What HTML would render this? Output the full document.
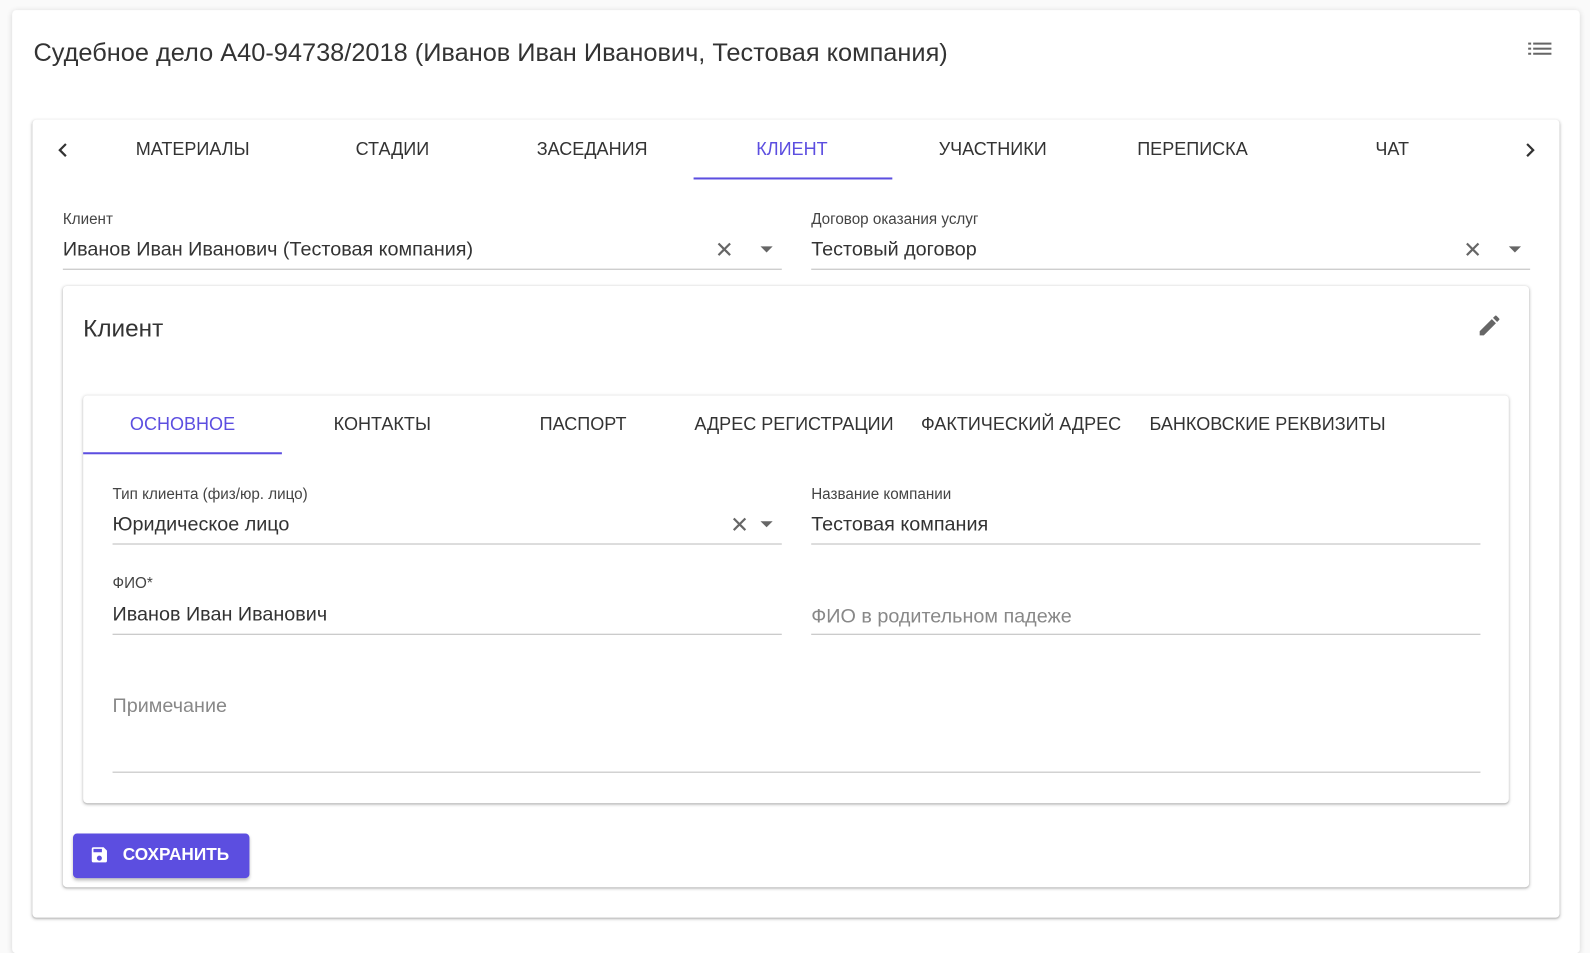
<!DOCTYPE html>
<html><head><meta charset="utf-8"><style>
*{box-sizing:border-box;margin:0;padding:0}
body{width:1590px;height:930px;background:#fafafa;font-family:"Liberation Sans",sans-serif;color:#333;position:relative;overflow:hidden}
#w{position:absolute;left:0;top:0;width:1568px;height:920px;transform:scale(1.014);transform-origin:0 0}
.a{position:absolute}
.card{position:absolute;background:#fff;border-radius:4px;box-shadow:0 1px 3px rgba(0,0,0,.25),0 1px 1px rgba(0,0,0,.08)}
.c{position:absolute;transform:translateX(-50%);white-space:nowrap;font-size:17.8px;color:#333}
.lab{position:absolute;font-size:15px;color:#444;white-space:nowrap}
.val{position:absolute;font-size:19.5px;color:#333;white-space:nowrap}
.ph{position:absolute;font-size:19.5px;color:#888;white-space:nowrap}
.ln{position:absolute;height:1px;background:#bbb}
.x{position:absolute;font-size:22px;color:#666;line-height:1}
.tri{position:absolute;width:0;height:0;border-left:6px solid transparent;border-right:6px solid transparent;border-top:6px solid #666}
</style></head><body><div id="w">
<div class="card" style="left:12px;top:10px;width:1546px;height:930px;box-shadow:0 1px 6px rgba(0,0,0,.15)"></div>
<div class="a" style="left:33px;top:38px;font-size:25px;color:#333;white-space:nowrap">Судебное дело А40-94738/2018 (Иванов Иван Иванович, Тестовая компания)</div>
<svg class="a" style="left:1507px;top:41px" width="24" height="16" viewBox="0 0 24 16"><g fill="#666"><rect x="0" y="1" width="3" height="2"/><rect x="5" y="1" width="18" height="2"/><rect x="0" y="6" width="3" height="2"/><rect x="5" y="6" width="18" height="2"/><rect x="0" y="11" width="3" height="2"/><rect x="5" y="11" width="18" height="2"/></g></svg>

<div class="card" style="left:32px;top:118px;width:1506px;height:787px"></div>
<svg class="a" style="left:55px;top:140px" width="14" height="16" viewBox="0 0 14 16"><path d="M10 2 L4 8 L10 14" stroke="#333" stroke-width="2.2" fill="none"/></svg>
<svg class="a" style="left:1502px;top:140px" width="14" height="16" viewBox="0 0 14 16"><path d="M4 2 L10 8 L4 14" stroke="#333" stroke-width="2.2" fill="none"/></svg>
<div class="c" style="left:190px;top:137px">МАТЕРИАЛЫ</div>
<div class="c" style="left:387px;top:137px">СТАДИИ</div>
<div class="c" style="left:584px;top:137px">ЗАСЕДАНИЯ</div>
<div class="c" style="left:781px;top:137px;color:#5c4ee0">КЛИЕНТ</div>
<div class="c" style="left:979px;top:137px">УЧАСТНИКИ</div>
<div class="c" style="left:1176px;top:137px">ПЕРЕПИСКА</div>
<div class="c" style="left:1373px;top:137px">ЧАТ</div>
<div class="a" style="left:684px;top:175px;width:196px;height:2px;background:#5c4ee0"></div>

<div class="lab" style="left:62px;top:208px">Клиент</div>
<div class="val" style="left:62px;top:235px">Иванов Иван Иванович (Тестовая компания)</div>
<div class="x" style="left:705px;top:236px">✕</div><div class="tri" style="left:750px;top:243px"></div>
<div class="ln" style="left:62px;top:265px;width:709px"></div>
<div class="lab" style="left:800px;top:208px">Договор оказания услуг</div>
<div class="val" style="left:800px;top:235px">Тестовый договор</div>
<div class="x" style="left:1443px;top:236px">✕</div><div class="tri" style="left:1488px;top:243px"></div>
<div class="ln" style="left:800px;top:265px;width:709px"></div>

<div class="card" style="left:62px;top:282px;width:1446px;height:593px"></div>
<div class="a" style="left:82px;top:311px;font-size:24px;color:#333">Клиент</div>
<svg class="a" style="left:1456px;top:308px" width="26" height="26" viewBox="0 0 24 24"><path fill="#666" d="M3 17.25V21h3.75L17.81 9.94l-3.75-3.75L3 17.25zM20.71 7.04a1 1 0 0 0 0-1.41l-2.34-2.34a1 1 0 0 0-1.41 0l-1.83 1.83 3.75 3.75 1.83-1.83z"/></svg>

<div class="card" style="left:82px;top:390px;width:1406px;height:402px"></div>
<div class="c" style="left:180px;top:408px;color:#5c4ee0">ОСНОВНОЕ</div>
<div class="c" style="left:377px;top:408px">КОНТАКТЫ</div>
<div class="c" style="left:575px;top:408px">ПАСПОРТ</div>
<div class="c" style="left:783px;top:408px">АДРЕС РЕГИСТРАЦИИ</div>
<div class="c" style="left:1007px;top:408px">ФАКТИЧЕСКИЙ АДРЕС</div>
<div class="c" style="left:1250px;top:408px">БАНКОВСКИЕ РЕКВИЗИТЫ</div>
<div class="a" style="left:82px;top:446px;width:196px;height:2px;background:#5c4ee0"></div>

<div class="lab" style="left:111px;top:479px">Тип клиента (физ/юр. лицо)</div>
<div class="val" style="left:111px;top:506px">Юридическое лицо</div>
<div class="x" style="left:720px;top:507px">✕</div><div class="tri" style="left:750px;top:514px"></div>
<div class="ln" style="left:111px;top:536px;width:660px"></div>
<div class="lab" style="left:800px;top:479px">Название компании</div>
<div class="val" style="left:800px;top:506px">Тестовая компания</div>
<div class="ln" style="left:800px;top:536px;width:660px"></div>

<div class="lab" style="left:111px;top:567px">ФИО*</div>
<div class="val" style="left:111px;top:595px">Иванов Иван Иванович</div>
<div class="ln" style="left:111px;top:625px;width:660px"></div>
<div class="ph" style="left:800px;top:597px">ФИО в родительном падеже</div>
<div class="ln" style="left:800px;top:625px;width:660px"></div>

<div class="ph" style="left:111px;top:685px">Примечание</div>
<div class="ln" style="left:111px;top:761px;width:1349px"></div>

<div class="a" style="left:72px;top:822px;width:174px;height:44px;background:#5c4ee0;border-radius:4px;box-shadow:0 2px 3px rgba(0,0,0,.25)"></div>
<svg class="a" style="left:88px;top:833px" width="20" height="20" viewBox="0 0 24 24"><path fill="#fff" d="M17 3H5a2 2 0 0 0-2 2v14a2 2 0 0 0 2 2h14a2 2 0 0 0 2-2V7l-4-4zm-5 16a3 3 0 1 1 0-6 3 3 0 0 1 0 6zm3-10H5V5h10v4z"/></svg>
<div class="a" style="left:121px;top:833px;font-size:17px;color:#fff;font-weight:bold;white-space:nowrap">СОХРАНИТЬ</div>
</div></body></html>
